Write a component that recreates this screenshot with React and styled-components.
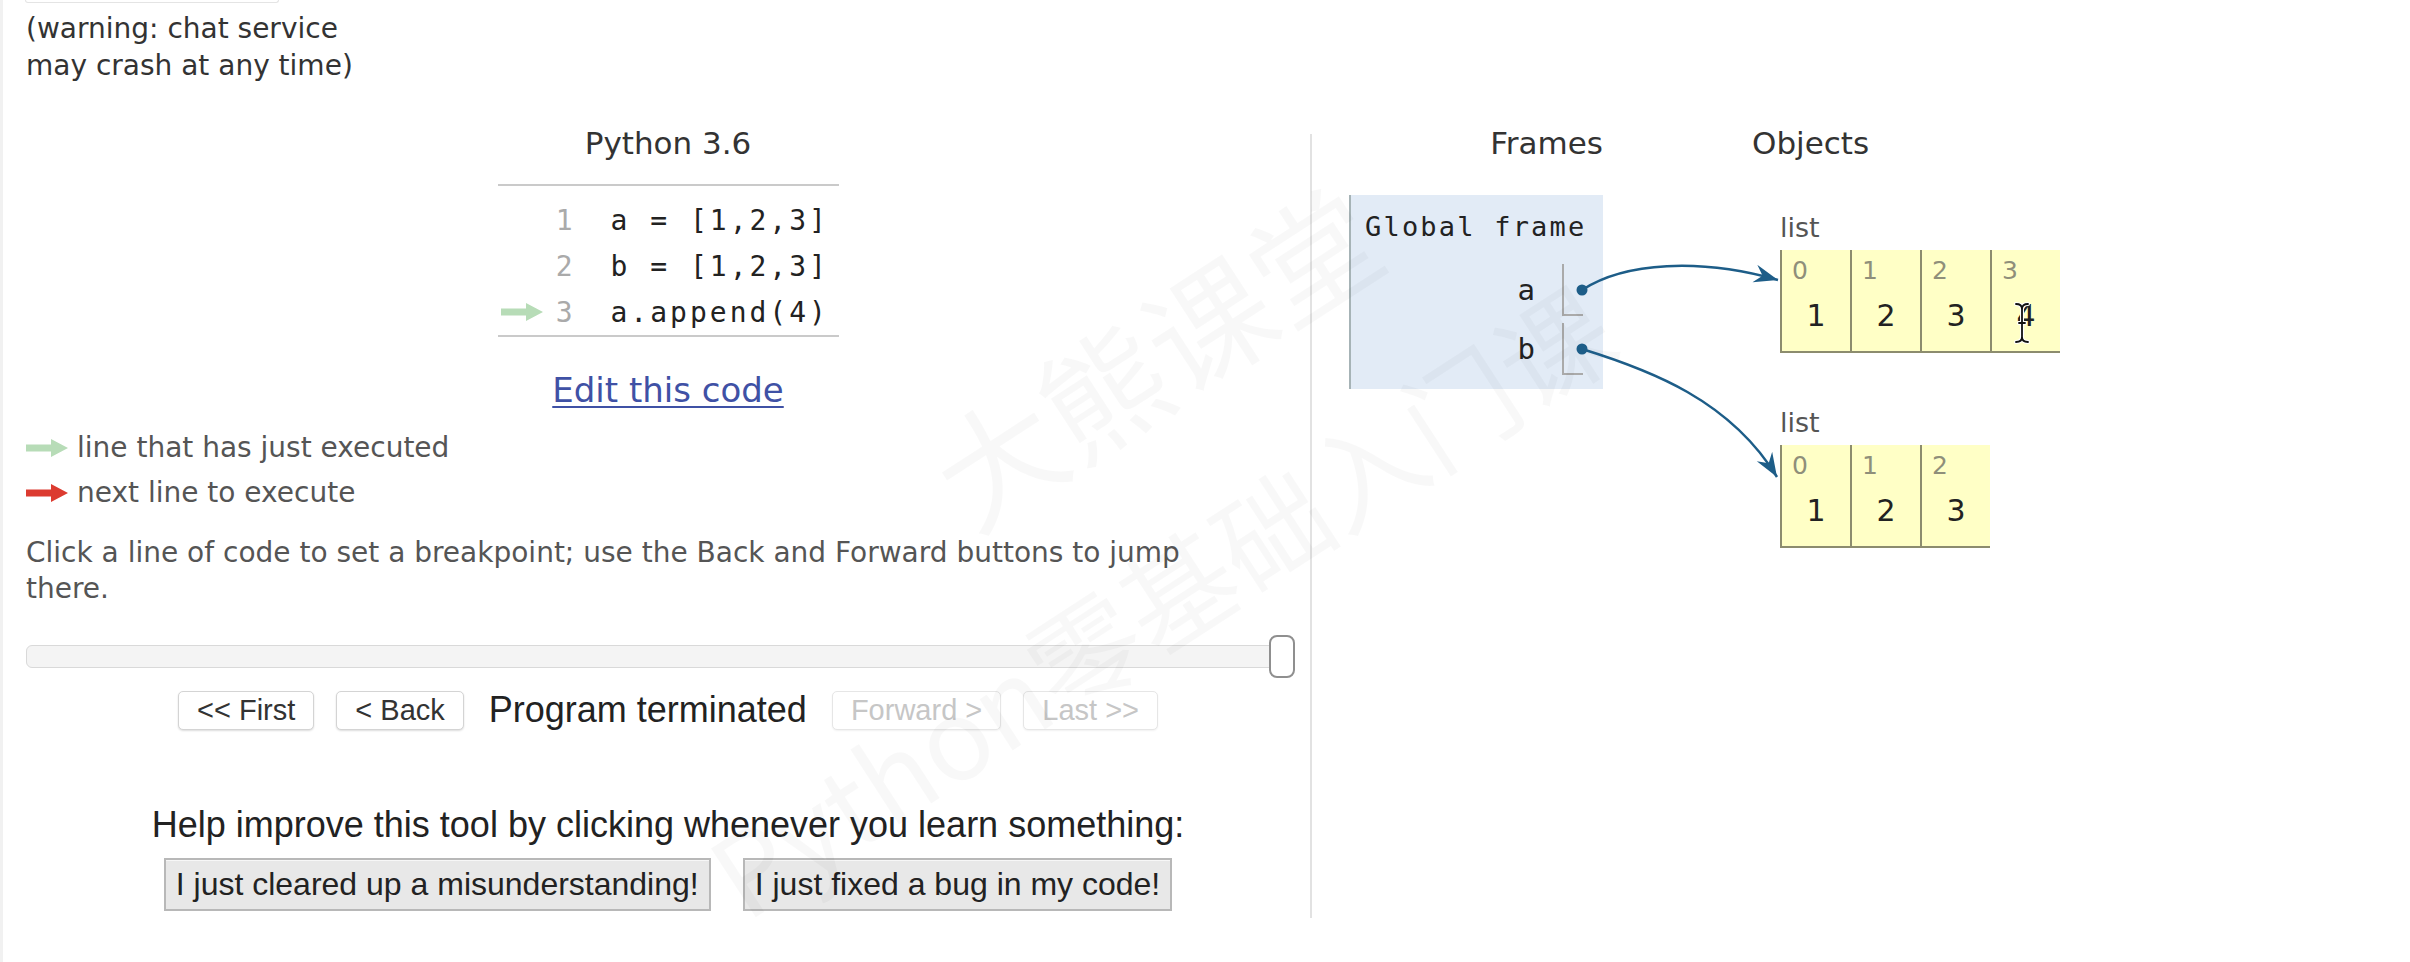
import React from 'react';
import styled, { createGlobalStyle } from 'styled-components';

const SANS = `"DejaVu Sans", Verdana, sans-serif`;
const HELV = `"Liberation Sans", Arial, Helvetica, sans-serif`;
const MONO = `"DejaVu Sans Mono", "Liberation Mono", monospace`;
const CJK = `"Noto Sans CJK SC", "Noto Sans", sans-serif`;

const GlobalStyle = createGlobalStyle`
  html, body {
    margin: 0;
    padding: 0;
    background: #ffffff;
  }
  body {
    font-family: ${SANS};
    color: #333;
  }
`

const Page = styled.div`
  position: relative;
  width: 2410px;
  height: 962px;
  padding-left: 26px;
  box-sizing: border-box;
  overflow: hidden;
  box-shadow: inset 3px 0 0 #f1f1f1;
`

const ChatStub = styled.div`
  width: 252px;
  height: 2px;
  margin-left: -1px;
  border: 1px solid #e4e4e4;
  border-top: none;
  border-radius: 0 0 4px 4px;
`

const Warning = styled.div`
  margin-top: 7px;
  font-size: 28px;
  line-height: 37px;
  color: #333;
`

const Main = styled.div`
  display: flex;
  margin-top: 41px;
`

const LeftPanel = styled.div`
  width: 1284px;
  flex-shrink: 0;
  display: flex;
  flex-direction: column;
`

const Title = styled.div`
  font-size: 31px;
  line-height: 36px;
  text-align: center;
  color: #333;
`

const CodeTable = styled.div`
  width: 341px;
  margin: 23px auto 0;
  padding-top: 11px;
  border-top: 2px solid #cacaca;
  border-bottom: 2px solid #cacaca;
`

const CodeRow = styled.div`
  display: grid;
  grid-template-columns: 51px 24px 1fr;
  align-items: center;
  height: 46px;
`

const ArrowCell = styled.div`
  display: flex;
  align-items: center;
  padding-left: 3px;
`

const LineNo = styled.div`
  font-family: ${MONO};
  font-size: 28px;
  text-align: right;
  color: #aaa;
`

const CodeText = styled.div`
  font-family: ${MONO};
  font-size: 28px;
  letter-spacing: 3px;
  white-space: pre;
  padding-left: 38px;
  color: #222;
`

const EditLink = styled.a`
  align-self: center;
  margin-top: 33px;
  font-size: 34px;
  line-height: 40px;
  color: #3f51a5;
  text-decoration: underline;
  text-decoration-thickness: 2px;
  text-underline-offset: 4px;
`

const Legend = styled.div`
  margin-top: 15px;
  display: flex;
  flex-direction: column;
`

const LegendRow = styled.div`
  display: flex;
  align-items: center;
  gap: 9px;
  height: 45px;
  font-size: 28px;
  color: #555;
`

const Hint = styled.div`
  margin-top: 20px;
  max-width: 1220px;
  font-size: 28px;
  line-height: 36px;
  color: #555;
`

const Slider = styled.div`
  position: relative;
  margin-top: 28px;
  width: 1269px;
  height: 43px;
  display: flex;
  align-items: center;
`

const Track = styled.div`
  flex: 1;
  height: 23px;
  box-sizing: border-box;
  background: #f4f4f4;
  border: 1px solid #d9d9d9;
  border-radius: 6px;
`

const Thumb = styled.div`
  position: absolute;
  right: 0;
  top: 0;
  width: 26px;
  height: 43px;
  box-sizing: border-box;
  background: #fff;
  border: 2px solid #8f8f8f;
  border-radius: 8px;
`

const NavRow = styled.div`
  margin-top: 11px;
  display: flex;
  justify-content: center;
  align-items: center;
  gap: 22px;
`

const NavButton = styled.button`
  height: 39px;
  padding: 0 18px;
  font-family: ${HELV};
  font-size: 29px;
  background: #fff;
  border: 1px solid ${p => (p.disabled ? '#e6e6e6' : '#d4d4d4')};
  border-radius: 5px;
  box-shadow: 0 1px 2px rgba(0, 0, 0, ${p => (p.disabled ? 0.06 : 0.14)});
  color: ${p => (p.disabled ? '#c6c6c6' : '#333')};
`

const Status = styled.span`
  margin: 0 3px;
  font-family: ${HELV};
  font-size: 36px;
  color: #222;
`

const Help = styled.div`
  margin-top: 73px;
  font-family: ${HELV};
  font-size: 36px;
  line-height: 42px;
  text-align: center;
  color: #222;
`

const FeedbackRow = styled.div`
  margin-top: 12px;
  display: flex;
  justify-content: center;
  gap: 32px;
`

const FeedbackButton = styled.button`
  height: 53px;
  padding: 0 10px;
  font-family: ${HELV};
  font-size: 32px;
  color: #222;
  background: #e8e8e8;
  border: 2px solid #b8b8b8;
  box-shadow: inset 0 1px 0 #f7f7f7;
`

const Divider = styled.div`
  width: 2px;
  height: 784px;
  margin-top: 9px;
  background: #e2e2e2;
  flex-shrink: 0;
`

const RightPanel = styled.div`
  flex: 1;
  display: flex;
  padding-left: 37px;
`

const FramesCol = styled.div`
  width: 254px;
`

const ColHeader = styled.div`
  font-size: 31px;
  line-height: 36px;
  color: #333;
  text-align: ${p => (p.right ? 'right' : 'left')};
`

const FrameBox = styled.div`
  margin-top: 34px;
  box-sizing: border-box;
  padding: 14px 20px 14px 14px;
  background: #e2ebf6;
  border-left: 2px solid #a6b3b6;
`

const FrameTitle = styled.div`
  font-family: ${MONO};
  font-size: 27px;
  letter-spacing: 2.2px;
  line-height: 36px;
  white-space: nowrap;
  color: #222;
`

const VarGrid = styled.div`
  margin-top: 19px;
  display: grid;
  grid-template-columns: 1fr 21px;
  grid-auto-rows: 52px;
  row-gap: 7px;
`

const VarName = styled.div`
  align-self: center;
  padding-right: 27px;
  text-align: right;
  font-family: ${MONO};
  font-size: 29px;
  color: #222;
`

const VarCell = styled.div`
  border-left: 2px solid #aaa;
  border-bottom: 2px solid #aaa;
`

const ObjectsCol = styled.div`
  margin-left: 149px;
`

const Heap = styled.div`
  margin-top: 52px;
  padding-left: 28px;
  display: flex;
  flex-direction: column;
  gap: 55px;
`

const ObjLabel = styled.div`
  font-size: 27px;
  line-height: 30px;
  color: #555;
`

const ListBox = styled.div`
  margin-top: 7px;
  display: flex;
`

const ListCell = styled.div`
  position: relative;
  width: 70px;
  height: 103px;
  box-sizing: border-box;
  padding-top: 7px;
  background: #ffffc6;
  border-left: 2px solid #8c8c6e;
  border-bottom: 2px solid #8c8c6e;
`

const ListIndex = styled.div`
  padding-left: 10px;
  font-size: 25px;
  line-height: 28px;
  color: #8f8f7a;
`

const ListValue = styled.div`
  margin-top: 13px;
  font-size: 30px;
  line-height: 36px;
  text-align: center;
  color: #222;
`

const TextCursor = styled.svg`
  position: absolute;
  left: 21px;
  top: 52px;
`

const Connectors = styled.svg`
  position: absolute;
  left: 0;
  top: 0;
  pointer-events: none;
`

const Watermark = styled.span`
  position: absolute;
  left: ${p => p.x}px;
  top: ${p => p.y}px;
  transform: translate(-50%, -50%) rotate(-33deg);
  font-family: ${CJK};
  font-size: ${p => p.size}px;
  font-weight: 400;
  white-space: nowrap;
  color: rgba(0, 0, 0, 0.028);
  pointer-events: none;
`

const StepArrow = ({ color }) => (
  <svg width="42" height="18" viewBox="0 0 42 18">
    <path d="M0 5.5 H25 V0 L42 9 L25 18 V12.5 H0 Z" fill={color} />
  </svg>
);

const GREEN = '#b7dcb7';
const RED = '#dc3b30';
const LINK = '#1d5d88';

const code = [
  { n: 1, text: 'a = [1,2,3]' },
  { n: 2, text: 'b = [1,2,3]' },
  { n: 3, text: 'a.append(4)', arrow: true },
];

const lists = [
  { values: [1, 2, 3, 4], cursorAt: 3 },
  { values: [1, 2, 3] },
];

export default function App() {
  return (
    <>
      <GlobalStyle />
      <Page>
        <ChatStub />
        <Warning>
          (warning: chat service<br />
          may crash at any time)
        </Warning>

        <Main>
          <LeftPanel>
            <Title>Python 3.6</Title>
            <CodeTable>
              {code.map(line => (
                <CodeRow key={line.n}>
                  <ArrowCell>{line.arrow && <StepArrow color={GREEN} />}</ArrowCell>
                  <LineNo>{line.n}</LineNo>
                  <CodeText>{line.text}</CodeText>
                </CodeRow>
              ))}
            </CodeTable>

            <EditLink href="#">Edit this code</EditLink>

            <Legend>
              <LegendRow>
                <StepArrow color={GREEN} />
                line that has just executed
              </LegendRow>
              <LegendRow>
                <StepArrow color={RED} />
                next line to execute
              </LegendRow>
            </Legend>

            <Hint>
              Click a line of code to set a breakpoint; use the Back and Forward buttons to jump there.
            </Hint>

            <Slider>
              <Track />
              <Thumb />
            </Slider>

            <NavRow>
              <NavButton>&lt;&lt; First</NavButton>
              <NavButton>&lt; Back</NavButton>
              <Status>Program terminated</Status>
              <NavButton disabled>Forward &gt;</NavButton>
              <NavButton disabled>Last &gt;&gt;</NavButton>
            </NavRow>

            <Help>Help improve this tool by clicking whenever you learn something:</Help>
            <FeedbackRow>
              <FeedbackButton>I just cleared up a misunderstanding!</FeedbackButton>
              <FeedbackButton>I just fixed a bug in my code!</FeedbackButton>
            </FeedbackRow>
          </LeftPanel>

          <Divider />

          <RightPanel>
            <FramesCol>
              <ColHeader right>Frames</ColHeader>
              <FrameBox>
                <FrameTitle>Global frame</FrameTitle>
                <VarGrid>
                  <VarName>a</VarName>
                  <VarCell />
                  <VarName>b</VarName>
                  <VarCell />
                </VarGrid>
              </FrameBox>
            </FramesCol>

            <ObjectsCol>
              <ColHeader>Objects</ColHeader>
              <Heap>
                {lists.map((list, i) => (
                  <div key={i}>
                    <ObjLabel>list</ObjLabel>
                    <ListBox>
                      {list.values.map((v, idx) => (
                        <ListCell key={idx}>
                          <ListIndex>{idx}</ListIndex>
                          <ListValue>{v}</ListValue>
                          {list.cursorAt === idx && (
                            <TextCursor width="18" height="42" viewBox="0 0 18 42">
                              <g fill="none" strokeLinecap="round">
                                <path d="M3 2 Q9 2 9 7 Q9 2 15 2 M9 7 V35 M3 40 Q9 40 9 35 Q9 40 15 40 M6 21 H12" stroke="#fff" strokeWidth="4" />
                                <path d="M3 2 Q9 2 9 7 Q9 2 15 2 M9 7 V35 M3 40 Q9 40 9 35 Q9 40 15 40 M6 21 H12" stroke="#111" strokeWidth="1.8" />
                              </g>
                            </TextCursor>
                          )}
                        </ListCell>
                      ))}
                    </ListBox>
                  </div>
                ))}
              </Heap>
            </ObjectsCol>
          </RightPanel>
        </Main>

        <Watermark x={1153} y={353} size={125}>大熊课堂</Watermark>
        <Watermark x={1159} y={597} size={112}>Python零基础入门课</Watermark>

        <Connectors width="2410" height="962" viewBox="0 0 2410 962">
          <defs>
            <marker id="head" markerUnits="userSpaceOnUse" markerWidth="26" markerHeight="20" refX="24" refY="9" orient="auto">
              <path d="M0 0 L24 9 L0 18 L8 9 Z" fill={LINK} />
            </marker>
          </defs>
          <path d="M1582 290 C1625 262 1700 258 1778 280" stroke={LINK} strokeWidth="2.5" fill="none" markerEnd="url(#head)" />
          <path d="M1582 349 C1650 370 1730 400 1777 477" stroke={LINK} strokeWidth="2.5" fill="none" markerEnd="url(#head)" />
          <circle cx="1582" cy="290" r="5.5" fill={LINK} />
          <circle cx="1582" cy="349" r="5.5" fill={LINK} />
        </Connectors>
      </Page>
    </>
  );
}
